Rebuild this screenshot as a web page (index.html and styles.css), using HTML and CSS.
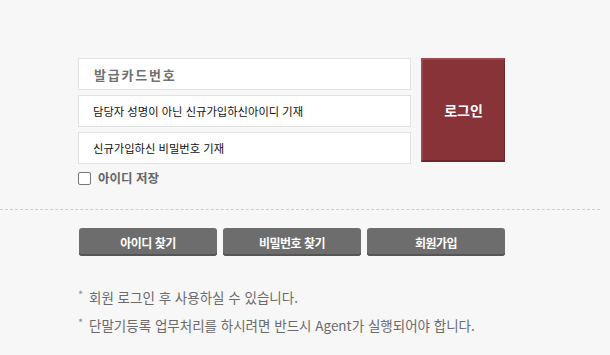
FILE: index.html
```html
<!DOCTYPE html>
<html lang="ko">
<head>
<meta charset="utf-8">
<link rel="stylesheet" href="styles.css">
</head>
<body>
<div class="page">
  <div class="login-area">
    <div class="login-row">
      <div class="fields">
        <div class="field field-card">발급카드번호</div>
        <div class="field">담당자 성명이 아닌 신규가입하신아이디 기재</div>
        <div class="field">신규가입하신 비밀번호 기재</div>
      </div>
      <button class="login-btn">로그인</button>
    </div>
    <label class="save-id"><span class="checkbox"></span><span>아이디 저장</span></label>
  </div>
  <div class="divider"></div>
  <div class="links">
    <button class="link-btn">아이디 찾기</button>
    <button class="link-btn">비밀번호 찾기</button>
    <button class="link-btn">회원가입</button>
  </div>
  <ul class="notes">
    <li>회원 로그인 후 사용하실 수 있습니다.</li>
    <li>단말기등록 업무처리를 하시려면 반드시 Agent가 실행되어야 합니다.</li>
  </ul>
</div>
</body>
</html>
```

FILE: styles.css
```css
html, body {
  margin: 0;
  padding: 0;
  background: #f7f7f7;
  font-family: "Noto Sans CJK KR", "Noto Sans", sans-serif;
}
.page {
  width: 600px;
  padding-top: 58px;
}
.login-area {
  padding-left: 78px;
}
.login-row {
  display: flex;
  align-items: flex-start;
}
.fields {
  display: flex;
  flex-direction: column;
  gap: 5px;
  width: 333px;
}
.field {
  box-sizing: border-box;
  height: 32px;
  background: #fff;
  border: 1px solid #e2e2e2;
  padding-left: 14px;
  display: flex;
  align-items: center;
  font-size: 11.3px;
  color: #111;
}
.field-card {
  font-size: 13px;
  font-weight: bold;
  color: #707070;
  letter-spacing: 1.8px;
  padding-left: 15px;
}
.login-btn {
  box-sizing: border-box;
  margin-left: 10px;
  width: 84px;
  height: 104px;
  background: #873337;
  border: 0;
  border-top: 2px solid #9b4a4f;
  border-left: 2px solid #9b4a4f;
  border-bottom: 2px solid #6e2428;
  border-right: 1px solid #76292d;
  color: #fff;
  font-family: inherit;
  font-size: 14px;
  font-weight: bold;
  padding: 0;
}
.save-id {
  display: flex;
  align-items: center;
  gap: 7px;
  margin-top: 6px;
  font-size: 12.5px;
  line-height: 16px;
  font-weight: bold;
  color: #666;
}
.checkbox {
  box-sizing: border-box;
  width: 13px;
  height: 13px;
  border: 1px solid #777;
  border-radius: 2px;
  background: #fff;
}
.divider {
  margin-top: 23px;
  border-top: 1px dashed #cfcfcf;
}
.links {
  display: flex;
  gap: 6px;
  padding-left: 79px;
  margin-top: 18px;
}
.link-btn {
  box-sizing: border-box;
  width: 138px;
  height: 28px;
  background: #6d6d6d;
  border: 0;
  border-radius: 3px;
  box-shadow: inset 0 -2px 0 #555;
  color: #fff;
  font-family: inherit;
  font-size: 12px;
  font-weight: bold;
  padding: 0;
  letter-spacing: -0.5px;
}
.notes {
  list-style: none;
  margin: 32px 0 0;
  padding-left: 78px;
  font-size: 13.5px;
  color: #6a6a6a;
}
.notes li {
  position: relative;
  padding-left: 11px;
  line-height: 18px;
  margin-bottom: 10px;
}
.notes li::before {
  content: "*";
  position: absolute;
  left: 0;
  top: -3px;
  font-size: 11px;
  color: #888;
}
```
